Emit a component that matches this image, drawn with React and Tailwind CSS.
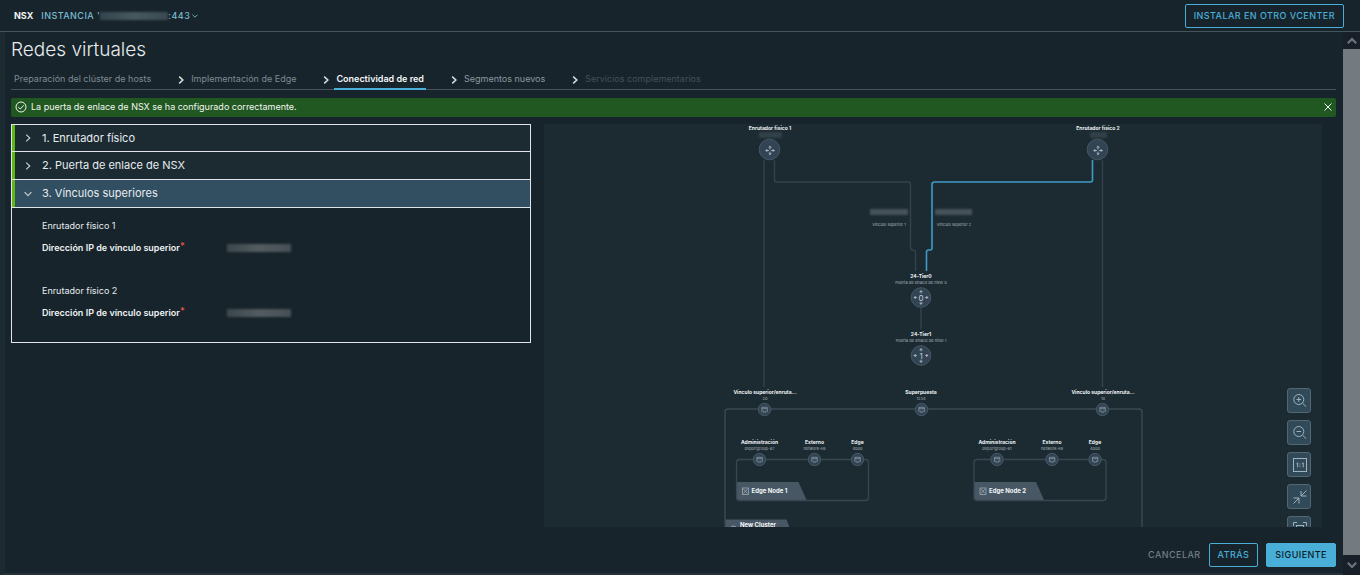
import React from "react";

const STEPS = [
  { label: "Preparación del clúster de hosts", state: "done" },
  { label: "Implementación de Edge", state: "done" },
  { label: "Conectividad de red", state: "current" },
  { label: "Segmentos nuevos", state: "next" },
  { label: "Servicios complementarios", state: "disabled" },
];

const STEP_STYLES = {
  done: "text-[#7d8b93]",
  current: "font-semibold text-[#f2f6f8]",
  next: "text-[#8b989f]",
  disabled: "text-[#435159]",
};

const SECTIONS = [
  { label: "1. Enrutador físico", open: false },
  { label: "2. Puerta de enlace de NSX", open: false },
  { label: "3. Vínculos superiores", open: true },
];

function Chevron({ className, down = false, strokeWidth = 1.6 }) {
  return (
    <svg viewBox="0 0 8 8" className={className} fill="none" stroke="currentColor" strokeWidth={strokeWidth} aria-hidden="true">
      <path d={down ? "M0.6 2.2 4 5.6 7.4 2.2" : "M2.2 0.6 5.8 4 2.2 7.4"} />
    </svg>
  );
}

function Header() {
  return (
    <header className="flex h-8 items-center justify-between border-b border-[#46535b] pr-4 pl-3.5">
      <div className="flex items-center gap-2">
        <span className="text-[9px] font-bold text-[#eef2f4]">NSX</span>
        <button type="button" className="flex items-center text-[9px] font-medium tracking-wider text-[#79bdd3]">
          <span>INSTANCIA '</span>
          <span className="h-2 w-[68px] bg-gradient-to-r from-[#34454e] via-[#48585f] to-[#3a4a52] blur-[1px]" />
          <span>:443</span>
          <Chevron down strokeWidth={1.2} className="ml-0.5 size-1.5" />
        </button>
      </div>
      <button type="button" className="h-6 rounded-xs border border-[#49afd9] px-2 text-[9px] font-medium tracking-wider text-[#49afd9]">
        INSTALAR EN OTRO VCENTER
      </button>
    </header>
  );
}

function Stepper() {
  return (
    <nav className="border-b border-[#46535b]" aria-label="Pasos">
      <ol className="-mb-px flex h-6 items-stretch pl-px">
        {STEPS.map((s, i) => (
          <li key={s.label} className="flex items-stretch">
            {i > 0 && <Chevron className="mt-1 mr-1 ml-6 size-2 self-center text-[#d3dade]" />}
            <button
              type="button"
              disabled={s.state === "disabled"}
              className={`border-b-2 px-0.5 pt-1 text-[9px] ${s.state === "current" ? "border-[#49afd9]" : "border-transparent"} ${STEP_STYLES[s.state]}`}
            >
              {s.label}
            </button>
          </li>
        ))}
      </ol>
    </nav>
  );
}

function Alert() {
  return (
    <div role="status" className="mt-2 flex h-[19px] items-center gap-1 rounded-xs bg-[#215721] px-1 pb-0.5 text-[9px] text-[#f2f6f2]">
      <svg viewBox="0 0 12 12" className="size-3" fill="none" stroke="currentColor" strokeWidth="1" aria-hidden="true">
        <circle cx="6" cy="6" r="5" />
        <path d="M3.3 6.2 5.2 8 8.8 4.3" />
      </svg>
      <p className="flex-1">La puerta de enlace de NSX se ha configurado correctamente.</p>
      <button type="button" aria-label="Cerrar">
        <svg viewBox="0 0 8 8" className="size-2" stroke="currentColor" strokeWidth="1" aria-hidden="true">
          <path d="M0.5 0.5 7.5 7.5M7.5 0.5 0.5 7.5" />
        </svg>
      </button>
    </div>
  );
}

function UplinkField({ title }) {
  return (
    <div>
      <h3 className="text-[9px] leading-3 text-[#e6ecef]">{title}</h3>
      <dl className="mt-2.5 flex items-center">
        <dt className="flex w-[185px] text-[9px] leading-3 font-semibold text-[#eef2f4]">
          Dirección IP de vínculo superior<span className="-mt-0.5 text-[#e0524a]">*</span>
        </dt>
        <dd className="h-2 w-16 bg-gradient-to-r from-[#3b474d] via-[#525c61] to-[#454f55] blur-[1px]" />
      </dl>
    </div>
  );
}

function Accordion() {
  return (
    <section className="self-start border border-[#dfe5e8]">
      {SECTIONS.map((s) => (
        <h2 key={s.label} className="h-7 border-b border-[#dfe5e8] first:h-[27px]">
          <button
            type="button"
            aria-expanded={s.open}
            className={`flex h-full w-full items-center gap-2.5 border-l-3 border-[#5eb715] pl-[9px] text-left text-[11px] text-[#e6ecef] ${s.open ? "bg-[#324f62]" : "bg-[#1c2a32]"}`}
          >
            <Chevron down={s.open} strokeWidth={1.2} className="size-2 text-[#c3ccd1]" />
            <span>{s.label}</span>
          </button>
        </h2>
      ))}
      <div className="flex flex-col gap-[31px] pt-3 pb-[23px] pl-[30px]">
        <UplinkField title="Enrutador físico 1" />
        <UplinkField title="Enrutador físico 2" />
      </div>
    </section>
  );
}

function Label({ x, y, title, sub }) {
  return (
    <g textAnchor="middle">
      <text x={x} y={y + 2} className="fill-[#eef2f4] text-[5px] font-bold">{title}</text>
      {sub && <text x={x} y={y + 8} className="fill-[#a9b5bb] text-[4px]">{sub}</text>}
    </g>
  );
}

function Redacted({ x, y, width, fill = "#46535a" }) {
  return <rect x={x} y={y} width={width} height="6" fill={fill} className="blur-[1px]" />;
}

/* Four arrows pointing away from the centre of a router glyph. */
function Arrows({ inner, outer, head }) {
  return (
    <g fill="none" stroke="#b4c1c9" strokeWidth="0.9">
      {[0, 90, 180, 270].map((a) => (
        <path
          key={a}
          transform={`rotate(${a})`}
          d={`M${inner} 0H${outer}M${outer - head} ${-head}L${outer} 0L${outer - head} ${head}`}
        />
      ))}
    </g>
  );
}

function Router({ x, y }) {
  return (
    <g transform={`translate(${x} ${y})`}>
      <circle r="10.3" fill="#324453" stroke="#465866" />
      <g transform="translate(0.5 1)">
        <Arrows inner={1.2} outer={4.2} head={1.3} />
      </g>
    </g>
  );
}

function Tier({ x, y, digit }) {
  return (
    <g transform={`translate(${x} ${y})`}>
      <circle r="9.8" fill="#324453" stroke="#465866" />
      <Arrows inner={4.2} outer={6.8} head={1.5} />
      <text y="3" textAnchor="middle" className="fill-[#c3ced5] text-[8px]">{digit}</text>
    </g>
  );
}

function Port({ x, y }) {
  return (
    <g transform={`translate(${x} ${y})`}>
      <circle r="6.2" fill="#324453" stroke="#465866" />
      <path d="M-2.6 2.4V-2.2H2.8V2.4M-2.6 -0.8H2.8M-1.3 1.2V2.6H1.5V1.2" fill="none" stroke="#8fa0ab" strokeWidth="0.7" />
    </g>
  );
}

function EdgeNode({ x, name, sub1, sub2 }) {
  return (
    <g>
      <path d={`M${x} 358h62l8 18h-67a3 3 0 0 1-3-3z`} fill="#485764" />
      <rect x={x} y="335.5" width="132" height="41" rx="3" fill="none" stroke="#384751" strokeWidth="1.3" />
      <g fill="none" stroke="#a9b5bd" strokeWidth="0.7">
        <rect x={x + 6} y="364" width="6" height="6.5" />
        <path d={`M${x + 7} 365l4 4.5M${x + 11} 365l-4 4.5`} />
      </g>
      <text x={x + 15} y="369" className="fill-[#f2f6f8] text-[6px] font-bold">{name}</text>
      <Label x={x + 23} y={318} title="Administración" sub={sub1} />
      <Label x={x + 78} y={318} title="Externo" sub={sub2} />
      <Label x={x + 121} y={318} title="Edge" sub="4000" />
      <Port x={x + 23} y={335.5} />
      <Port x={x + 78} y={335.5} />
      <Port x={x + 121} y={335.5} />
    </g>
  );
}

function Topology() {
  return (
    <svg width="778" height="403" viewBox="0 0 778 403" className="mx-auto block max-w-none" role="img" aria-label="Topología de red">
      <g fill="none" stroke="#34424b" strokeWidth="1.4">
        <path d="M220 36V263" />
        <path d="M558.5 36V263" />
        <path d="M230.5 36V56a2 2 0 0 0 2 2H364a2.5 2.5 0 0 1 2.5 2.5V124a2 2 0 0 0 2 2H369.5a2 2 0 0 1 2 2V147" />
        <path d="M377 184V205" />
        <path d="M181 410V288a3 3 0 0 1 3-3H595a3 3 0 0 1 3 3V410" stroke="#3a4952" />
      </g>
      <path
        d="M548.5 36V56a2 2 0 0 1-2 2H390.5a2.5 2.5 0 0 0-2.5 2.5V124a2 2 0 0 1-2 2H384.5a2 2 0 0 0-2 2V147"
        fill="none"
        stroke="#3f9cc6"
        strokeWidth="1.6"
      />

      <Label x={226} y={4} title="Enrutador físico 1" />
      <Redacted x={215} y={8} width={23} fill="#324047" />
      <Router x={225.5} y={25.5} />

      <Label x={554} y={4} title="Enrutador físico 2" />
      <Redacted x={546} y={8} width={17} fill="#324047" />
      <Router x={553.5} y={25.5} />

      <Redacted x={326} y={85} width={38} />
      <Redacted x={391} y={85} width={37} />
      <g className="fill-[#a9b5bb] text-[4px]" textAnchor="middle">
        <text x="345" y="102">Vínculo superior 1</text>
        <text x="410" y="102">Vínculo superior 2</text>
      </g>

      <Label x={377} y={152} title="24-Tier0" sub="Puerta de enlace de nivel 0" />
      <Tier x={377} y={173.5} digit="0" />
      <Label x={377} y={210} title="24-Tier1" sub="Puerta de enlace de nivel 1" />
      <Tier x={377} y={231.5} digit="1" />

      <Label x={221} y={268} title="Vínculo superior/enruta..." sub="20" />
      <Label x={377} y={268} title="Superpuesta" sub="1234" />
      <Label x={559} y={268} title="Vínculo superior/enruta..." sub="10" />
      <Port x={220.5} y={285.5} />
      <Port x={377.5} y={285.5} />
      <Port x={558.5} y={285.5} />

      <EdgeNode x={192.5} name="Edge Node 1" sub1="dvportgroup-87" sub2="network-69" />
      <EdgeNode x={430} name="Edge Node 2" sub1="dvportgroup-81" sub2="network-69" />

      <path d="M181.5 395.5H242.5L248 410H181.5z" fill="#485764" />
      <circle cx="189.5" cy="405" r="3" fill="none" stroke="#a9b5bd" strokeWidth="0.8" />
      <text x="196" y="403" className="fill-[#f2f6f8] text-[6px] font-bold">New Cluster</text>
    </svg>
  );
}

const ZOOM_TOOLS = [
  {
    label: "Acercar",
    icon: (
      <>
        <circle cx="6.8" cy="6.5" r="5" />
        <path d="M10.5 10.2 14 13.5M4.5 6.5H9.1M6.8 4.2V8.8" />
      </>
    ),
  },
  {
    label: "Alejar",
    icon: (
      <>
        <circle cx="6.8" cy="6.5" r="5" />
        <path d="M10.5 10.2 14 13.5M4.5 6.5H9.1" />
      </>
    ),
  },
  {
    label: "Tamaño real",
    icon: (
      <>
        <rect x="1.5" y="1.5" width="13" height="13" />
        <path d="M4.5 6.8 5.7 5.8V10.3M10 6.8 11.2 5.8V10.3M8 6.5V7.5M8 8.8V9.8" />
      </>
    ),
  },
  {
    label: "Contraer",
    icon: <path d="M14.5 1.5 9 7M9 2V7H14.5M1.5 14.5 7 9M1.5 9H7V14.5" />,
  },
  {
    label: "Ajustar a la pantalla",
    icon: (
      <>
        <path d="M1.5 5V1.5H5M11 1.5H14.5V5M1.5 11V14.5H5M11 14.5H14.5V11" />
        <rect x="4.5" y="4.5" width="7" height="7" />
      </>
    ),
  },
];

function Canvas() {
  return (
    <section className="relative overflow-hidden bg-[#1c2a32]">
      <Topology />
      <div className="absolute top-[264px] right-[11px] flex flex-col gap-[7px]">
        {ZOOM_TOOLS.map((t) => (
          <button
            key={t.label}
            type="button"
            aria-label={t.label}
            className="flex h-[25px] w-6 items-center justify-center rounded-[3px] border border-[#566670] bg-[#304a5a] pt-px pl-0.5"
          >
            <svg viewBox="0 0 16 16" className="size-4" fill="none" stroke="#a3b1ba" strokeWidth="1" aria-hidden="true">
              {t.icon}
            </svg>
          </button>
        ))}
      </div>
    </section>
  );
}

function Footer() {
  return (
    <footer className="flex justify-end gap-2 pt-4 pb-1.5 text-[9px] font-medium tracking-wider">
      <button type="button" className="h-6 text-[#717f87]">CANCELAR</button>
      <button type="button" className="h-6 rounded-xs border border-[#49afd9] px-2 text-[#49afd9]">ATRÁS</button>
      <button type="button" className="h-6 rounded-xs border border-[#49afd9] bg-[#49afd9] px-2 text-[#0c1a22]">SIGUIENTE</button>
    </footer>
  );
}

function ScrollRail() {
  return (
    <div className="flex w-[17px] flex-col bg-[#191f28] text-[#6f747b]" aria-hidden="true">
      <div className="flex h-[17px] items-center justify-center">
        <Chevron down strokeWidth={1.8} className="size-2.5 rotate-180" />
      </div>
      <div className="flex-1 bg-[#737a80]" />
      <div className="flex h-5 items-center justify-center">
        <Chevron down strokeWidth={1.8} className="size-2.5" />
      </div>
    </div>
  );
}

export default function App() {
  return (
    <div className="flex min-h-screen flex-col bg-[#18242b] font-['Inter',sans-serif]">
      <Header />
      <div className="flex flex-1">
        <main className="flex-1 border-b-2 border-l-5 border-b-[#24323b] border-l-[#1c2a32] pr-[7px] pl-1.5">
          <h1 className="pt-1.5 text-[19px] leading-6 font-light text-[#e6ecef]">Redes virtuales</h1>
          <div className="pt-1">
            <Stepper />
          </div>
          <Alert />
          <div className="mt-[7px] grid grid-cols-[minmax(0,520fr)_minmax(0,778fr)] gap-[13px] pr-3.5">
            <Accordion />
            <Canvas />
          </div>
          <Footer />
        </main>
        <ScrollRail />
      </div>
    </div>
  );
}
